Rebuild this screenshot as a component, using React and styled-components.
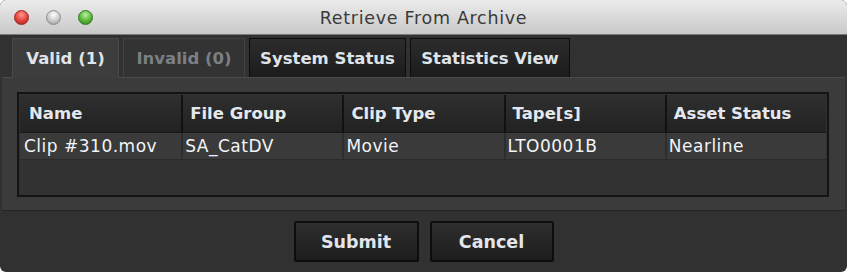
import React from "react";
import styled, { createGlobalStyle } from "styled-components";

const Global = createGlobalStyle`
  html, body { margin: 0; padding: 0; background: #ffffff; }
  body { font-family: "DejaVu Sans", "Liberation Sans", sans-serif; }
`;

const Window = styled.div`
  width: 847px;
  height: 272px;
  background: #313131;
  border-radius: 6px;
  overflow: hidden;
  display: flex;
  flex-direction: column;
`;

const TitleBar = styled.div`
  height: 34px;
  flex: none;
  background: linear-gradient(#ececec, #d6d6d6 60%, #c9c9c9);
  border-bottom: 1px solid #7a7a7a;
  position: relative;
  display: flex;
  align-items: center;
  justify-content: center;
`;

const Lights = styled.div`
  position: absolute;
  left: 14px;
  top: 10px;
  display: flex;
  gap: 17px;
`;

const Light = styled.span`
  width: 15px;
  height: 15px;
  border-radius: 50%;
  box-sizing: border-box;
  border: 1px solid ${(p) => p.$edge};
  background: radial-gradient(circle at 50% 30%, ${(p) => p.$hi} 0%, ${(p) => p.$color} 55%, ${(p) => p.$edge} 100%);
`;

const Title = styled.div`
  font-size: 17.5px;
  color: #3a3a3a;
  letter-spacing: 0.7px;
  padding-top: 1px;
`;

const TabBar = styled.div`
  height: 39px;
  flex: none;
  padding: 3px 0 0 12px;
  display: flex;
  gap: 4px;
`;

const Tab = styled.div`
  box-sizing: border-box;
  width: ${(p) => p.$w}px;
  height: 39px;
  display: flex;
  align-items: center;
  justify-content: center;
  font-size: 16.5px;
  font-weight: bold;
  color: ${(p) => (p.$muted ? "#7b7f86" : "#dfe4ea")};
  background: ${(p) =>
    p.$active
      ? "#3d3d3d"
      : p.$muted
      ? "#333333"
      : "linear-gradient(#2c2c2c, #1c1c1c)"};
  border: 1px solid ${(p) => (p.$active ? "#4a4a4a" : p.$muted ? "#434343" : "#0c0c0c")};
  border-bottom: none;
  ${(p) => p.$active && "height: 40px; margin-bottom: -1px; position: relative; z-index: 1;"}
`;

const Panel = styled.div`
  margin: 0 2px;
  height: 134px;
  flex: none;
  box-sizing: border-box;
  background: #3b3b3b;
  border-top: 1px solid #4a4a4a;
  border-bottom: 1px solid #262626;
  padding: 14px 16px 13px 15px;
`;

const Table = styled.div`
  height: 105px;
  box-sizing: border-box;
  background: #323232;
  border: 2px solid #141414;
  padding: 1px 1px 0 1px;
`;

const Row = styled.div`
  display: grid;
  grid-template-columns: repeat(5, 1fr);
  height: ${(p) => p.$h}px;
  background: ${(p) => (p.$head ? "linear-gradient(#2f2f2f, #222222)" : "#3a3a3a")};
  border-bottom: 1px solid ${(p) => (p.$head ? "#181818" : "#2a2a2a")};
`;

const Cell = styled.div`
  display: flex;
  align-items: center;
  padding-left: ${(p) => (p.$head ? 7 : 2)}px;
  font-size: ${(p) => (p.$head ? 16.5 : 17)}px;
  letter-spacing: ${(p) => (p.$head ? 0 : 0.5)}px;
  font-weight: ${(p) => (p.$head ? "bold" : "normal")};
  color: ${(p) => (p.$head ? "#e4e8ee" : "#f2f4f7")};
  border-left: 2px solid ${(p) => (p.$first ? "transparent" : p.$head ? "#111111" : "#2d2d2d")};
  white-space: nowrap;
  overflow: hidden;
`;

const Footer = styled.div`
  flex: 1;
  display: flex;
  justify-content: center;
  gap: 11px;
  padding-top: 10px;
`;

const Button = styled.button`
  width: ${(p) => p.$w}px;
  height: 41px;
  box-sizing: border-box;
  border: 2px solid #0d0d0d;
  border-radius: 2px;
  background: linear-gradient(#2e2e2e, #1d1d1d);
  color: #e2e6ec;
  font-family: "DejaVu Sans", "Liberation Sans", sans-serif;
  font-size: 17.5px;
  font-weight: bold;
  padding: 0;
`;

const columns = ["Name", "File Group", "Clip Type", "Tape[s]", "Asset Status"];
const rows = [["Clip #310.mov", "SA_CatDV", "Movie", "LTO0001B", "Nearline"]];

export default function App() {
  return (
    <>
      <Global />
      <Window>
        <TitleBar>
          <Lights>
            <Light $color="#e0413a" $hi="#ff9a90" $edge="#a0231e" />
            <Light $color="#c9c9c9" $hi="#ffffff" $edge="#8f8f8f" />
            <Light $color="#57b43a" $hi="#b8f29a" $edge="#2f7d1f" />
          </Lights>
          <Title>Retrieve From Archive</Title>
        </TitleBar>
        <TabBar>
          <Tab $w={107} $active>Valid (1)</Tab>
          <Tab $w={122} $muted>Invalid (0)</Tab>
          <Tab $w={157}>System Status</Tab>
          <Tab $w={160}>Statistics View</Tab>
        </TabBar>
        <Panel>
          <Table>
            <Row $head $h={37}>
              {columns.map((c, i) => (
                <Cell key={c} $head $first={i === 0}>{c}</Cell>
              ))}
            </Row>
            {rows.map((r, j) => (
              <Row key={j} $h={26}>
                {r.map((c, i) => (
                  <Cell key={i} $first={i === 0}>{c}</Cell>
                ))}
              </Row>
            ))}
          </Table>
        </Panel>
        <Footer>
          <Button $w={125}>Submit</Button>
          <Button $w={124}>Cancel</Button>
        </Footer>
      </Window>
    </>
  );
}
